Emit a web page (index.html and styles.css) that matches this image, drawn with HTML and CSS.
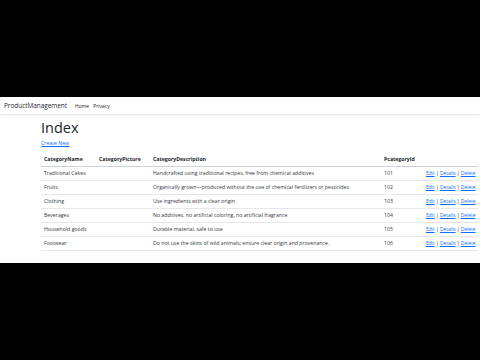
FILE: index.html
```html
<!DOCTYPE html>
<html>
<head>
<meta charset="utf-8">
<link rel="stylesheet" href="styles.css">
</head>
<body>
<div class="bar-top"></div>
<div class="page">
  <nav class="navbar">
    <span class="brand">ProductManagement</span>
    <a class="nav-link">Home</a>
    <a class="nav-link">Privacy</a>
  </nav>
  <main class="container">
    <h1 class="title">Index</h1>
    <p class="create"><a href="#">Create New</a></p>
    <table class="table">
      <thead>
        <tr>
          <th class="c-name">CategoryName</th>
          <th class="c-pic">CategoryPicture</th>
          <th class="c-desc">CategoryDescription</th>
          <th class="c-id">PcategoryId</th>
          <th class="c-act"></th>
        </tr>
      </thead>
      <tbody>
        <tr><td>Traditional Cakes</td><td></td><td>Handcrafted using traditional recipes, free from chemical additives</td><td>101</td><td class="actions"><a href="#">Edit</a> | <a href="#">Details</a> | <a href="#">Delete</a></td></tr>
        <tr><td>Fruits</td><td></td><td>Organically grown—produced without the use of chemical fertilizers or pesticides</td><td>102</td><td class="actions"><a href="#">Edit</a> | <a href="#">Details</a> | <a href="#">Delete</a></td></tr>
        <tr><td>Clothing</td><td></td><td>Use ingredients with a clear origin</td><td>103</td><td class="actions"><a href="#">Edit</a> | <a href="#">Details</a> | <a href="#">Delete</a></td></tr>
        <tr><td>Beverages</td><td></td><td>No additives, no artificial coloring, no artificial fragrance</td><td>104</td><td class="actions"><a href="#">Edit</a> | <a href="#">Details</a> | <a href="#">Delete</a></td></tr>
        <tr><td>Household goods</td><td></td><td>Durable material, safe to use</td><td>105</td><td class="actions"><a href="#">Edit</a> | <a href="#">Details</a> | <a href="#">Delete</a></td></tr>
        <tr><td>Footwear</td><td></td><td>Do not use the skins of wild animals; ensure clear origin and provenance.</td><td>106</td><td class="actions"><a href="#">Edit</a> | <a href="#">Details</a> | <a href="#">Delete</a></td></tr>
      </tbody>
    </table>
  </main>
</div>
</body>
</html>
```
FILE: styles.css
```css
html, body {
  margin: 0;
  padding: 0;
  background: #000;
  height: 100%;
}
body {
  font-family: "Open Sans", "Noto Sans", sans-serif;
  color: #212529;
}
.bar-top {
  height: 97px;
}
.page {
  background: #fff;
  height: 166px;
  overflow: hidden;
}
.navbar {
  height: 17px;
  display: flex;
  align-items: center;
  padding-left: 4px;
  border-bottom: 1px solid #e9ecef;
  box-shadow: 0 1px 2px rgba(0,0,0,0.05);
}
.brand {
  font-size: 6.4px;
  color: #212529;
  margin-right: 8px;
}
.nav-link {
  font-size: 5px;
  color: #212529;
  margin-right: 4px;
  text-decoration: none;
}
.container {
  padding: 0 2px 0 41px;
}
.title {
  font-size: 14.5px;
  font-weight: 500;
  margin: 4px 0 0 0;
  line-height: 18px;
}
.create {
  margin: 2px 0 0 0;
  font-size: 5.2px;
  line-height: 9px;
}
a {
  color: #0d6efd;
  text-decoration: underline;
}
.table {
  width: 437px;
  table-layout: fixed;
  border-collapse: collapse;
  font-size: 5.2px;
  margin-top: 4px;
  color: #33373b;
}
.table th, .table td {
  box-sizing: border-box;
  text-align: left;
  padding: 0 3px;
  height: 14px;
  border-bottom: 1px solid #e5e7ea;
  white-space: nowrap;
  overflow: visible;
}
.table th {
  font-weight: 700;
  color: #212529;
  border-bottom: 1px solid #cfd3d7;
}
.c-name { width: 55px; }
.c-pic { width: 54px; }
.c-desc { width: 231px; }
.c-id { width: 42px; }
.c-act { width: 55px; }
.table td.actions { color: #212529; font-size: 4.9px; }
```
